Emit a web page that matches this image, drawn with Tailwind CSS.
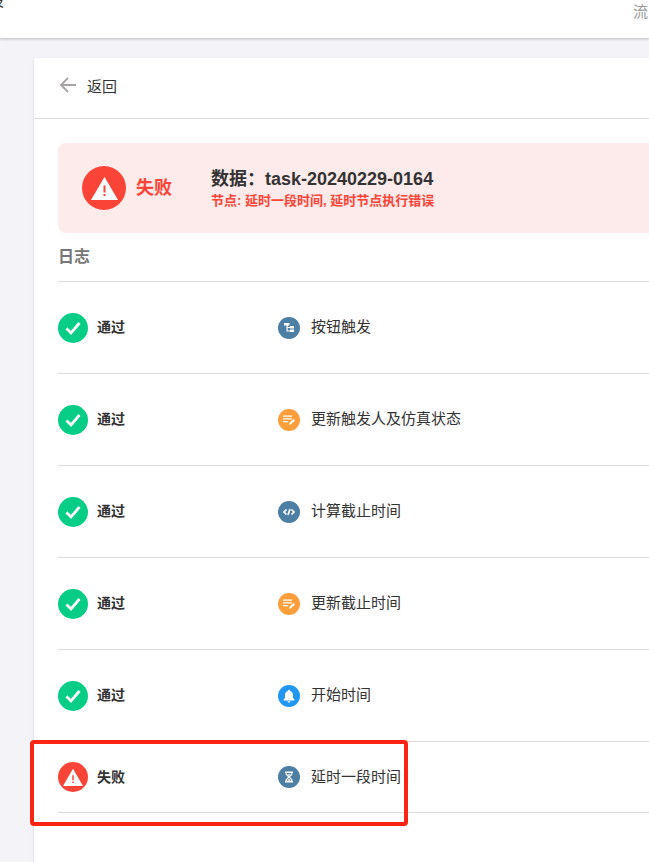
<!DOCTYPE html>
<html lang="zh-CN">
<head>
  <meta charset="UTF-8" />
  <title>日志</title>
  <script src="https://cdn.jsdelivr.net/npm/@tailwindcss/browser@4"></script>
</head>
<body class="relative w-[649px] h-[862px] overflow-hidden bg-[#f3f3f8] font-['Liberation_Sans','Noto_Sans_CJK_SC',sans-serif] text-[#333]">

  <!-- Top Bar -->
  <header class="relative h-[39px] bg-white border-b border-[#cfcfcf] shadow-[0_1px_2px_rgba(0,0,0,0.12)]">
    <span class="absolute left-[-11px] top-[-9px] text-[15px] leading-5 text-[#333]">设</span>
    <span class="absolute left-[633px] top-[2px] text-[15px] leading-5 text-[#999]">流</span>
  </header>

  <main class="ml-[34px] mt-[19px] h-[805px] bg-white shadow-[-1px_0_2px_rgba(0,0,0,0.06)]">
    <!-- Back -->
    <div class="flex items-center h-[61px] pl-[25px] border-b border-[#dcdcdc]">
      <svg class="w-[18px] h-[18px] mb-[7px]" viewBox="0 0 18 18" fill="none" stroke="#a8a4a4" stroke-width="1.8">
        <path d="M17 9H2M9 2L2 9L9 16"/>
      </svg>
      <span class="ml-[10px] mb-[2px] text-[15px] text-[#333]">返回</span>
    </div>

    <div class="pl-6">
      <!-- Result banner -->
      <section class="flex items-center h-[90px] mt-6 pl-6 bg-[#fdeaea] rounded-l-lg">
        <div class="flex items-center justify-center w-11 h-11 rounded-full bg-[#fb4438]">
          <svg class="w-[27px] h-[24px]" viewBox="0 0 27 24"><path fill="#fff" d="M13.5 1L27 24H0z"/><path fill="#fb4438" d="M12.5 9.5h2v7h-2zM12.5 18h2v2h-2z"/></svg>
        </div>
        <span class="ml-[10px] w-[75px] text-lg font-bold text-[#fb4438]">失败</span>
        <div>
          <div class="text-lg leading-[25px] font-bold text-[#333]">数据：task-20240229-0164</div>
          <div class="text-[13px] leading-[18px] font-bold text-[#fb4438]">节点: 延时一段时间, 延时节点执行错误</div>
        </div>
      </section>

      <h2 class="h-[49px] pt-3 text-base leading-[24px] font-bold text-[#777] border-b border-[#dcdcdc]">日志</h2>

      <!-- Log rows -->
      <div class="flex items-center h-[92px] border-b border-[#dcdcdc]">
        <div class="flex items-center w-[220px]">
          <div class="flex items-center justify-center w-[30px] h-[30px] rounded-full bg-[#07cd87]">
            <svg class="w-[18px] h-[18px]" viewBox="0 0 18 18" fill="none" stroke="#fff" stroke-width="2.8"><path d="M2.500 9.500L7 14L15.500 4"/></svg>
          </div>
          <span class="ml-[9px] text-[14px] font-bold text-[#333]">通过</span>
        </div>
        <div class="flex items-center justify-center w-[22px] h-[22px] rounded-full bg-[#4d7ea3]">
          <svg class="w-3 h-3" viewBox="0 0 12 12" fill="#fff"><path d="M1 1h5.500v2.500H4.700v1.400h2.300V4h4v2.500H7v-.6H4.700v2.600H7V7.600h4v2.500H7v-.6H3.500v-6H1z"/></svg>
        </div>
        <span class="ml-[11px] text-[15px] text-[#333]">按钮触发</span>
      </div>

      <div class="flex items-center h-[92px] border-b border-[#dcdcdc]">
        <div class="flex items-center w-[220px]">
          <div class="flex items-center justify-center w-[30px] h-[30px] rounded-full bg-[#07cd87]">
            <svg class="w-[18px] h-[18px]" viewBox="0 0 18 18" fill="none" stroke="#fff" stroke-width="2.8"><path d="M2.500 9.500L7 14L15.500 4"/></svg>
          </div>
          <span class="ml-[9px] text-[14px] font-bold text-[#333]">通过</span>
        </div>
        <div class="flex items-center justify-center w-[22px] h-[22px] rounded-full bg-[#ff9f3b]">
          <svg class="w-[14px] h-[14px]" viewBox="0 0 14 14" fill="#fff"><path d="M1 2.500h9v1.300H1zM1 5.200h9v1.300H1zM1 7.900h5v1.300H1zM7 11.800l.5-2L11.500 6l1.500 1.500-4 3.800z"/></svg>
        </div>
        <span class="ml-[11px] text-[15px] text-[#333]">更新触发人及仿真状态</span>
      </div>

      <div class="flex items-center h-[92px] border-b border-[#dcdcdc]">
        <div class="flex items-center w-[220px]">
          <div class="flex items-center justify-center w-[30px] h-[30px] rounded-full bg-[#07cd87]">
            <svg class="w-[18px] h-[18px]" viewBox="0 0 18 18" fill="none" stroke="#fff" stroke-width="2.8"><path d="M2.500 9.500L7 14L15.500 4"/></svg>
          </div>
          <span class="ml-[9px] text-[14px] font-bold text-[#333]">通过</span>
        </div>
        <div class="flex items-center justify-center w-[22px] h-[22px] rounded-full bg-[#4d7ea3]">
          <svg class="w-[14px] h-[14px]" viewBox="0 0 14 14" fill="none" stroke="#fff" stroke-width="1.700"><path d="M4.500 4.500L2 7l2.500 2.500M9.500 4.500L12 7l-2.500 2.500M8 4L6 10"/></svg>
        </div>
        <span class="ml-[11px] text-[15px] text-[#333]">计算截止时间</span>
      </div>

      <div class="flex items-center h-[92px] border-b border-[#dcdcdc]">
        <div class="flex items-center w-[220px]">
          <div class="flex items-center justify-center w-[30px] h-[30px] rounded-full bg-[#07cd87]">
            <svg class="w-[18px] h-[18px]" viewBox="0 0 18 18" fill="none" stroke="#fff" stroke-width="2.8"><path d="M2.500 9.500L7 14L15.500 4"/></svg>
          </div>
          <span class="ml-[9px] text-[14px] font-bold text-[#333]">通过</span>
        </div>
        <div class="flex items-center justify-center w-[22px] h-[22px] rounded-full bg-[#ff9f3b]">
          <svg class="w-[14px] h-[14px]" viewBox="0 0 14 14" fill="#fff"><path d="M1 2.500h9v1.300H1zM1 5.200h9v1.300H1zM1 7.900h5v1.300H1zM7 11.800l.5-2L11.500 6l1.500 1.500-4 3.800z"/></svg>
        </div>
        <span class="ml-[11px] text-[15px] text-[#333]">更新截止时间</span>
      </div>

      <div class="flex items-center h-[92px] border-b border-[#dcdcdc]">
        <div class="flex items-center w-[220px]">
          <div class="flex items-center justify-center w-[30px] h-[30px] rounded-full bg-[#07cd87]">
            <svg class="w-[18px] h-[18px]" viewBox="0 0 18 18" fill="none" stroke="#fff" stroke-width="2.8"><path d="M2.500 9.500L7 14L15.500 4"/></svg>
          </div>
          <span class="ml-[9px] text-[14px] font-bold text-[#333]">通过</span>
        </div>
        <div class="flex items-center justify-center w-[22px] h-[22px] rounded-full bg-[#2196f3]">
          <svg class="w-[14px] h-[14px]" viewBox="0 0 14 14" fill="#fff"><path d="M7 .8c.7 0 1.100.5 1.100 1.100C10 2.400 11 4 11 6v3l1.500 1.800v.6h-11v-.6L3 9V6c0-2 1-3.600 2.900-4.100C5.900 1.300 6.300.8 7 .8zM5.500 12.200h3C8.400 13 7.800 13.500 7 13.500S5.600 13 5.500 12.200z"/></svg>
        </div>
        <span class="ml-[11px] text-[15px] text-[#333]">开始时间</span>
      </div>

      <div class="flex items-center h-[71px] border-b border-[#dcdcdc]">
        <div class="flex items-center w-[220px]">
          <div class="flex items-center justify-center w-[30px] h-[30px] rounded-full bg-[#fb4438]">
            <svg class="w-[20px] h-[18px]" viewBox="0 0 27 24"><path fill="#fff" d="M13.500 1L27 24H0z"/><path fill="#fb4438" d="M12.500 9.500h2v7h-2zM12.500 18h2v2h-2z"/></svg>
          </div>
          <span class="ml-[9px] text-[14px] font-bold text-[#333]">失败</span>
        </div>
        <div class="flex items-center justify-center w-[22px] h-[22px] rounded-full bg-[#4d7ea3]">
          <svg class="w-3 h-3" viewBox="0 0 12 12" fill="#fff" fill-rule="evenodd"><path d="M2 .5h8V2h-.6v1.500L7 6l2.400 2.500V10h.6v1.500H2V10h.6V8.500L5 6 2.600 3.500V2H2zM3.800 2v1L6 5.200 8.200 3V2zM6 6.800L3.800 9v1h4.400V9z"/><path d="M4.300 3.200h3.400L6 5zM6 7.800l1.800 1.900H4.200z"/></svg>
        </div>
        <span class="ml-[11px] text-[15px] text-[#333]">延时一段时间</span>
      </div>
    </div>
  </main>

  <!-- Red annotation drawn over the screenshot -->
  <div class="absolute left-[30px] top-[740px] w-[378px] h-[86px] border-[4px] border-[#fb2516] rounded-[4px]"></div>
</body>
</html>
